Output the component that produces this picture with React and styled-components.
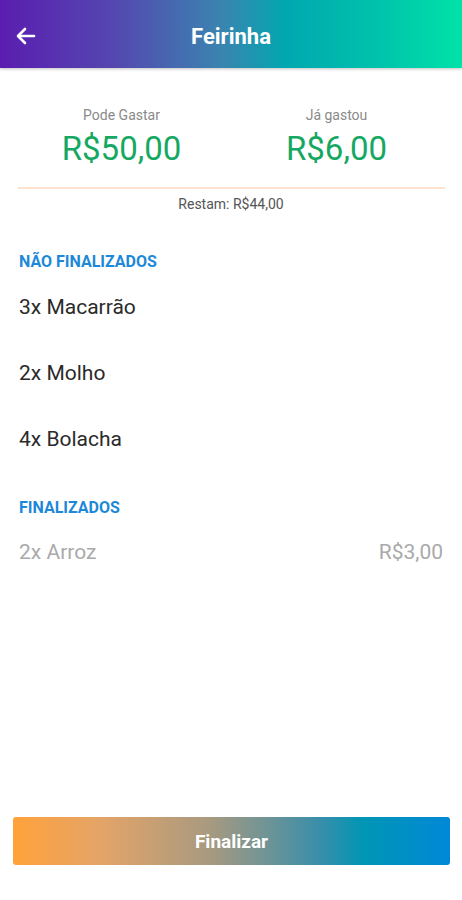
import React from 'react'
import styled, {createGlobalStyle} from 'styled-components'

const GlobalStyle = createGlobalStyle`
  html, body {
    margin: 0;
    padding: 0;
    background: #fff;
    font-family: Roboto, "Liberation Sans", sans-serif;
  }
`

const Page = styled.div`
  width: 462px;
  height: 900px;
  display: flex;
  flex-direction: column;
  background: #fff;
  overflow: hidden;
`

const Header = styled.header`
  height: 68px;
  flex-shrink: 0;
  display: flex;
  align-items: center;
  justify-content: center;
  position: relative;
  background: linear-gradient(90deg, #5a1db0 0%, #5448b0 25%, #3a84b0 48%, #00a8b0 62%, #00c0ac 80%, #00e2a8 100%);
  box-shadow: 0 1px 3px rgba(0, 0, 0, 0.25);
`

const BackButton = styled.button`
  position: absolute;
  left: 14px;
  top: 24px;
  padding: 0;
  border: 0;
  background: none;
  display: flex;
  cursor: pointer;
`

const Title = styled.h1`
  margin: 4px 0 0;
  color: #fff;
  font-size: 22px;
  font-weight: 700;
`

const Summary = styled.div`
  display: grid;
  grid-template-columns: 1fr 1fr;
  padding: 39px 18px 0 14px;
`

const Stat = styled.div`
  display: flex;
  flex-direction: column;
  align-items: center;
`

const StatLabel = styled.span`
  font-size: 14px;
  color: #8a8a8a;
  line-height: 17px;
`

const StatValue = styled.span`
  font-size: 33px;
  color: #16a862;
  line-height: 40px;
  margin-top: 5px;
`

const Divider = styled.hr`
  margin: 18px 17px 0 18px;
  border: 0;
  border-top: 2px solid #fde3cf;
`

const Remaining = styled.div`
  text-align: center;
  font-size: 14px;
  color: #555;
  margin-top: 7px;
`

const SectionTitle = styled.h2`
  margin: ${p => p.top}px 0 0 19px;
  font-size: 16px;
  font-weight: 700;
  color: #1e88d8;
  line-height: 18px;
`

const ItemList = styled.ul`
  list-style: none;
  margin: 0;
  padding: 0 19px 0 19px;
`

const Item = styled.li`
  display: flex;
  justify-content: space-between;
  height: 66px;
  align-items: flex-start;
  padding-top: ${p => (p.done ? 23 : 24)}px;
  box-sizing: border-box;
  font-size: 21px;
  line-height: 24px;
  color: ${p => (p.done ? '#aaa' : '#2a2a2a')};
`

const Footer = styled.div`
  margin-top: auto;
  padding: 0 12px 35px 13px;
`

const FinishButton = styled.button`
  width: 100%;
  height: 48px;
  border: 0;
  border-radius: 3px;
  background: linear-gradient(90deg, #ffa23a 0%, #e4a468 20%, #a89a80 45%, #3a8eaa 70%, #0096b4 80%, #0088d8 100%);
  color: #fff;
  font-family: Roboto, "Liberation Sans", sans-serif;
  font-size: 19px;
  font-weight: 700;
  cursor: pointer;
`

const pending = ['3x Macarrão', '2x Molho', '4x Bolacha']
const done = [{name: '2x Arroz', price: 'R$3,00'}]

export default function App() {
  return (
    <Page>
      <GlobalStyle />
      <Header>
        <BackButton aria-label="Voltar">
          <svg width="24" height="24" viewBox="0 0 24 24" fill="none" stroke="#fff" strokeWidth="2.6" strokeLinecap="round" strokeLinejoin="round">
            <path d="M20 12H4.5" />
            <path d="M11 5l-7 7 7 7" />
          </svg>
        </BackButton>
        <Title>Feirinha</Title>
      </Header>

      <Summary>
        <Stat>
          <StatLabel>Pode Gastar</StatLabel>
          <StatValue>R$50,00</StatValue>
        </Stat>
        <Stat>
          <StatLabel>Já gastou</StatLabel>
          <StatValue>R$6,00</StatValue>
        </Stat>
      </Summary>
      <Divider />
      <Remaining>Restam: R$44,00</Remaining>

      <SectionTitle top={41}>NÃO FINALIZADOS</SectionTitle>
      <ItemList>
        {pending.map(x => (
          <Item key={x}>{x}</Item>
        ))}
      </ItemList>

      <SectionTitle top={30}>FINALIZADOS</SectionTitle>
      <ItemList>
        {done.map(x => (
          <Item key={x.name} done>
            <span>{x.name}</span>
            <span>{x.price}</span>
          </Item>
        ))}
      </ItemList>

      <Footer>
        <FinishButton>Finalizar</FinishButton>
      </Footer>
    </Page>
  )
}
